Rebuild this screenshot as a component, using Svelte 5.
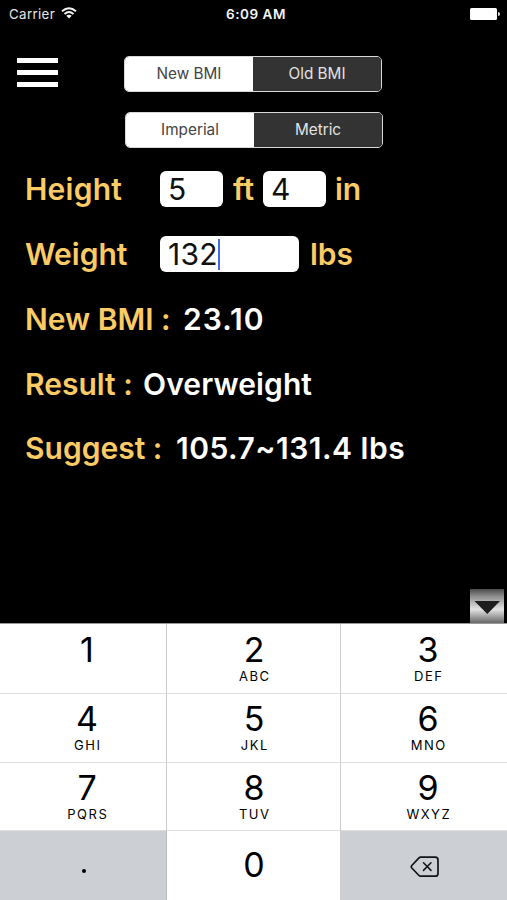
<script>
  const bmiModes = ['New BMI', 'Old BMI'];
  const unitModes = ['Imperial', 'Metric'];
  const keys = [
    ['1', ''], ['2', 'ABC'], ['3', 'DEF'],
    ['4', 'GHI'], ['5', 'JKL'], ['6', 'MNO'],
    ['7', 'PQRS'], ['8', 'TUV'], ['9', 'WXYZ']
  ];
  let bmi = $state(0);
  let unit = $state(0);
</script>

<div class="screen">
  <header class="status">
    <div class="carrier">
      <span>Carrier</span>
      <svg width="16" height="12" viewBox="0 0 16 12" fill="none" stroke="#f4f4f4" stroke-width="1.9">
        <path d="M1 4.3Q8-2 15 4.3" />
        <path d="M3.5 7Q8 3.1 12.5 7" />
        <path d="M8 11.4L5.3 8.7Q8 6.6 10.7 8.7Z" fill="#f4f4f4" stroke="none" />
      </svg>
    </div>
    <span class="time">6:09 AM</span>
    <div class="battery"><i></i><b></b></div>
  </header>

  <div class="top">
    <div class="menu"><i></i><i></i><i></i></div>
    <div class="segments">
      <div class="segment">
        {#each bmiModes as name, i}
          <button class:on={bmi === i} onclick={() => (bmi = i)}>{name}</button>
        {/each}
      </div>
      <div class="segment second">
        {#each unitModes as name, i}
          <button class:on={unit === i} onclick={() => (unit = i)}>{name}</button>
        {/each}
      </div>
    </div>
  </div>

  <main>
    <div class="row">
      <span class="label field-label height">Height</span>
      <span class="field">5</span>
      <span class="label ft">ft</span>
      <span class="field">4</span>
      <span class="label in">in</span>
    </div>
    <div class="row">
      <span class="label field-label weight">Weight</span>
      <span class="field wide">132<i class="caret"></i></span>
      <span class="label lbs">lbs</span>
    </div>
    <div class="row"><span class="label new">New BMI :</span><span class="value bmi">23.10</span></div>
    <div class="row"><span class="label result">Result :</span><span class="value over">Overweight</span></div>
    <div class="row"><span class="label suggest">Suggest :</span><span class="value range">105.7~131.4 lbs</span></div>
  </main>

  <div class="dismiss">
    <svg width="34" height="34" viewBox="0 0 34 34"><path d="M4.5 12H30L17.3 25Z" fill="#1d1d1d" /></svg>
  </div>

  <div class="keypad">
    {#each keys as [digit, letters]}
      <div class="key"><span class="digit">{digit}</span><span class="letters">{letters}</span></div>
    {/each}
    <div class="key gray dot"><i></i></div>
    <div class="key zero"><span class="digit">0</span></div>
    <div class="key gray back">
      <svg width="30" height="22" viewBox="0 0 30 22" fill="none" stroke="#111417" stroke-width="1.7" stroke-linejoin="round" stroke-linecap="round">
        <path d="M10.6 1.2H25.2Q28 1.2 28 4V17.4Q28 20.2 25.2 20.2H10.6Q9.7 20.2 9 19.5L1.8 12Q.7 10.8 1.8 9.5L9 1.9Q9.7 1.2 10.6 1.2Z" />
        <path d="M13.5 6.8L21 14.4M21 6.8L13.5 14.4" stroke-width="1.5" />
      </svg>
    </div>
  </div>
</div>

<style>
  :global(body) { margin: 0; background: #000; }
  .screen {
    width: 507px;
    height: 900px;
    box-sizing: border-box;
    overflow: hidden;
    background: #000;
    color: #fff;
    display: flex;
    flex-direction: column;
    font-family: Inter, "Liberation Sans", sans-serif;
    font-feature-settings: "calt" 0;
  }
  .status {
    height: 28px;
    flex: none;
    display: grid;
    grid-template-columns: 1fr auto 1fr;
    align-items: center;
    padding: 0 7px 0 9px;
    font-size: 13.3px;
    color: #e6e6e6;
  }
  .carrier { display: flex; align-items: center; gap: 6px; letter-spacing: .35px; }
  .carrier svg { margin-top: -3px; }
  .time { font-weight: 600; color: #f5f5f5; font-size: 13.5px; letter-spacing: .55px; margin-left: 3px; }
  .battery { display: flex; align-items: center; justify-content: flex-end; }
  .battery i { width: 27px; height: 12px; background: #fff; border-radius: 1.5px; }
  .battery b { width: 2px; height: 4px; margin-left: 1px; background: #ddd; border-radius: 0 2px 2px 0; }
  .top { display: flex; height: 129px; flex: none; padding: 28px 0 0 17px; box-sizing: border-box; }
  .menu { display: flex; flex-direction: column; gap: 7.5px; width: 41px; padding-top: 2px; margin-right: 66px; }
  .menu i { height: 4.6px; background: #fff; }
  .segments { display: flex; flex-direction: column; gap: 20px; }
  .segment {
    display: flex;
    width: 258px;
    height: 36px;
    box-sizing: border-box;
    border: 1.5px solid #d8d8d8;
    border-radius: 5px;
    overflow: hidden;
  }
  .second { margin-left: 1px; }
  .segment button {
    flex: 1;
    padding: 0 0 1px;
    border: 0;
    background: #333;
    color: #e2e2e2;
    font: 400 15.3px Inter, "Liberation Sans", sans-serif;
  }
  .segment button.on { background: #fff; color: #444; }
  main { height: 432px; flex: none; padding-left: 25px; box-sizing: border-box; }
  .row {
    height: 64.75px;
    display: flex;
    align-items: center;
    white-space: nowrap;
    font-size: 30px;
    font-weight: 600;
  }
  .label { color: #fbcb66; }
  .field-label { width: 135px; }
  .height { letter-spacing: .25px; }
  .field {
    width: 63px;
    height: 36px;
    box-sizing: border-box;
    padding-left: 8px;
    display: flex;
    align-items: center;
    border-radius: 6px;
    background: #fff;
    color: #111;
    font-weight: 400;
  }
  .wide { width: 139px; letter-spacing: .3px; }
  .caret { width: 2px; height: 31px; background: #4169e8; }
  .ft { width: 30px; padding-left: 10px; }
  .in { padding-left: 9px; }
  .lbs { padding-left: 11px; }
  .new { width: 158px; }
  .result { width: 118px; }
  .suggest { width: 151px; }
  .bmi { letter-spacing: 1px; }
  .over { letter-spacing: .1px; }
  .range { letter-spacing: .5px; }
  .dismiss {
    width: 34px;
    height: 34px;
    flex: none;
    align-self: flex-end;
    margin-right: 3px;
    background: linear-gradient(#4c4c4c, #8e8e8e 22%, #c9c9c9 48%, #e2e2e2 60%, #a4a4a4 80%, #686868);
  }
  .dismiss svg { display: block; }
  .keypad {
    flex: 1;
    min-height: 0;
    border-top: 1px solid #999;
    display: grid;
    grid-template-columns: 167px 174px 166px;
    grid-template-rows: 70px 69px 68px 70px;
    color: #000;
  }
  .key {
    background: #fff;
    display: flex;
    flex-direction: column;
    align-items: center;
    border-right: 1px solid #cbcbcb;
    border-bottom: 1px solid #dedede;
    box-sizing: border-box;
    padding: 8px 0 0 8px;
  }
  .key:nth-child(-n + 3) { padding-top: 9px; }
  .key:nth-child(3n + 2) { padding-left: 1px; }
  .key:nth-child(3n) { border-right: 0; }
  .digit { font-size: 34px; line-height: 34px; }
  .letters { font-size: 13px; line-height: 16px; letter-spacing: 1.5px; margin: 1px 0 0 1.5px; }
  .gray { background: #ccd0d5; border-color: #b8bcc0; }
  .key.dot { justify-content: center; padding: 11px 0 0 1px; }
  .dot i { width: 4px; height: 4px; border-radius: 50%; background: #000; }
  .key.zero { padding-top: 17px; }
  .key.back { justify-content: center; padding: 3px 0 0 2px; }
</style>
